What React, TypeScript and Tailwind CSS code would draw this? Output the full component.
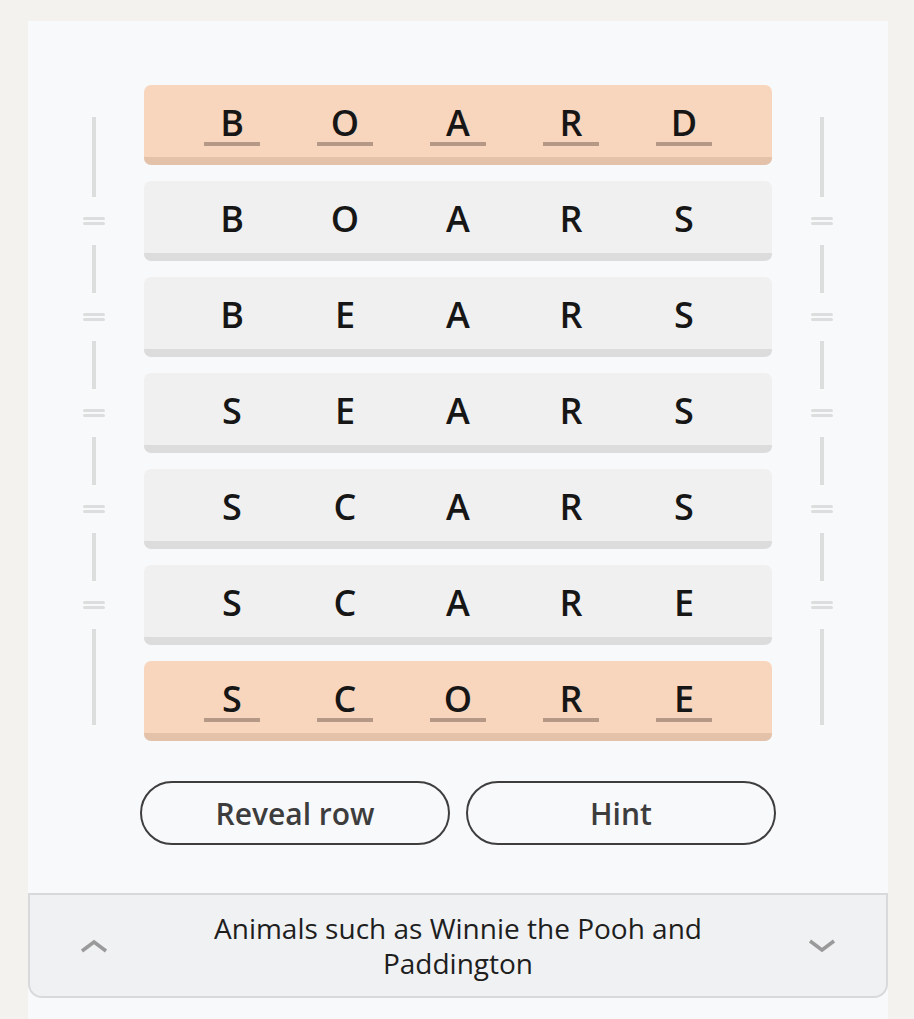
const rows: { word: string; fixed: boolean }[] = [
  { word: "BOARD", fixed: true },
  { word: "BOARS", fixed: false },
  { word: "BEARS", fixed: false },
  { word: "SEARS", fixed: false },
  { word: "SCARS", fixed: false },
  { word: "SCARE", fixed: false },
  { word: "SCORE", fixed: true },
];

function Rail() {
  // segments between rows, with "=" marks at the middle rows
  const segs = [80, 48, 48, 48, 48, 96];
  return (
    <div className="w-[22px] pt-[32px] flex flex-col items-center gap-[20px]">
      {segs.map((h, i) => (
        <div key={i} className="flex flex-col items-center gap-[20px]">
          {i > 0 && (
            <div className="w-[22px] flex flex-col gap-[2px]">
              <div className="h-[3px] bg-[#dcdddd] rounded-sm" />
              <div className="h-[3px] bg-[#dcdddd] rounded-sm" />
            </div>
          )}
          <div className="w-[4px] bg-[#dcdddd]" style={{ height: h }} />
        </div>
      ))}
    </div>
  );
}

function WordRow({ word, fixed }: { word: string; fixed: boolean }) {
  return (
    <div
      className={`h-[80px] rounded-[7px] border-b-[8px] flex items-center justify-between px-[60px] ${
        fixed ? "bg-[#f8d5bd] border-[#e4c2aa]" : "bg-[#f0f0f0] border-[#dcdcdc]"
      }`}
    >
      {word.split("").map((ch, i) => (
        <div key={i} className="relative w-[56px] h-[72px] flex items-center justify-center pt-[3px]">
          <span className="text-[36px] font-semibold leading-none text-[#161616]">{ch}</span>
          {fixed && (
            <span className="absolute left-0 right-0 top-[57px] h-[4px] bg-[#b59886]" />
          )}
        </div>
      ))}
    </div>
  );
}

function Chevron({ up }: { up: boolean }) {
  return (
    <svg width="28" height="15" viewBox="0 0 28 15" className="shrink-0">
      <polyline
        points={up ? "2,13 14,4 26,13" : "2,3 14,12 26,3"}
        fill="none"
        stroke="#9a9a9a"
        strokeWidth="3.5"
      />
    </svg>
  );
}

export default function App() {
  return (
    <div
      className="min-h-[1019px] bg-[#f3f2ee] pt-[21px]"
      style={{ fontFamily: '"Open Sans", "Noto Sans", sans-serif' }}
    >
      <div className="ml-[28px] w-[860px] bg-[#f8f9fb] min-h-[998px] pt-[64px]">
        <div className="flex justify-center gap-[39px]">
          <Rail />
          <div className="w-[628px] flex flex-col gap-[16px]">
            {rows.map((r, i) => (
              <WordRow key={i} word={r.word} fixed={r.fixed} />
            ))}
          </div>
          <Rail />
        </div>

        <div className="mt-[40px] flex justify-center gap-[16px]">
          <button className="w-[310px] h-[64px] rounded-full border-2 border-[#3e3e3e] text-[30px] font-semibold text-[#3d3d3d]">
            Reveal row
          </button>
          <button className="w-[310px] h-[64px] rounded-full border-2 border-[#3e3e3e] text-[30px] font-semibold text-[#3d3d3d]">
            Hint
          </button>
        </div>

        <div className="mt-[48px] h-[105px] border-2 border-[#d8d9db] rounded-b-[14px] bg-[#f0f1f3] flex items-center pl-[50px] pr-[50px]">
          <Chevron up />
          <p className="flex-1 mx-auto max-w-[580px] text-center text-[28px] leading-[35px] text-[#1e1e1e]">
            Animals such as Winnie the Pooh and Paddington
          </p>
          <Chevron up={false} />
        </div>
      </div>
    </div>
  );
}
